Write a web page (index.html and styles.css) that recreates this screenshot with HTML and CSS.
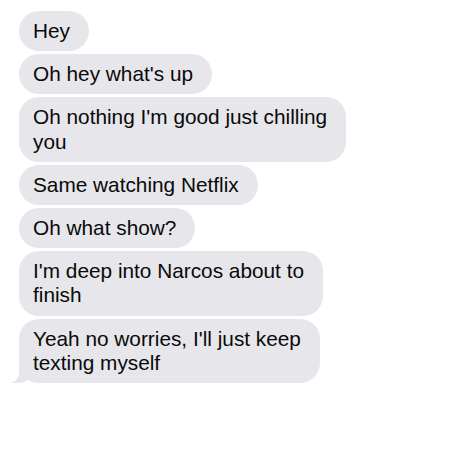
FILE: index.html
```html
<!DOCTYPE html>
<html lang="en">
<head>
    <meta charset="UTF-8">
    <meta name="viewport" content="width=device-width, initial-scale=1.0">
    <title>Messages</title>
    <link rel="stylesheet" href="styles.css">
</head>
<body>

    <div class="thread">
        <div class="bubble">Hey</div>
        <div class="bubble">Oh hey what's up</div>
        <div class="bubble">Oh nothing I'm good just chilling<br>you</div>
        <div class="bubble">Same watching Netflix</div>
        <div class="bubble">Oh what show?</div>
        <div class="bubble">I'm deep into Narcos about to<br>finish</div>
        <div class="bubble bubble-last">Yeah no worries, I'll just keep<br>texting myself</div>
    </div>

</body>
</html>
```

FILE: styles.css
```css
body {
    font-family: "Liberation Sans", Arial, sans-serif;
    background-color: #fff;
    color: #0a0a0a;
    margin: 0;
    padding: 0;
}
.thread {
    display: flex;
    flex-direction: column;
    align-items: flex-start;
    gap: 3px;
    padding: 11px 0 0 19px;
}
.bubble {
    position: relative;
    background-color: #e6e6eb;
    border-radius: 20px;
    padding: 8px 19px 8px 14px;
    font-size: 20.8px;
    line-height: 24.2px;
    white-space: nowrap;
}
.bubble-last::before {
    content: "";
    position: absolute;
    left: -7px;
    bottom: 0;
    width: 20px;
    height: 16px;
    background-color: #e6e6eb;
    border-bottom-right-radius: 14px 12px;
}
.bubble-last::after {
    content: "";
    position: absolute;
    left: -10px;
    bottom: 0;
    width: 10px;
    height: 20px;
    background-color: #fff;
    border-bottom-right-radius: 10px;
}
```
